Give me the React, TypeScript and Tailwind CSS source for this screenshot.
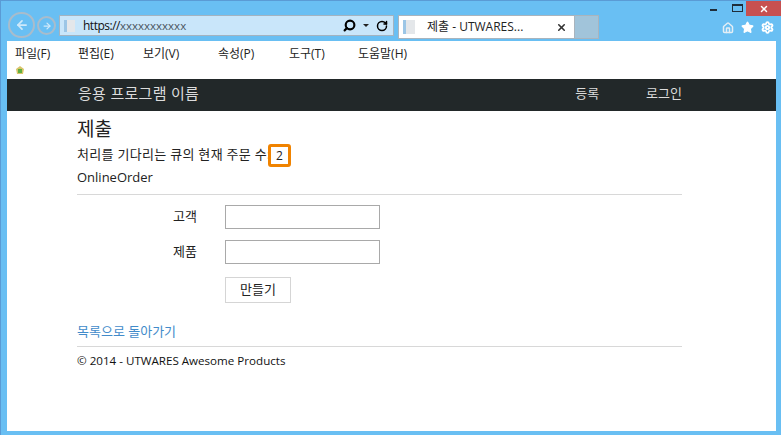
import { ArrowLeft, ArrowRight, House, RotateCw, Search, Settings, Star, X } from 'lucide-react'

const FONT = '"Open Sans", "Noto Sans CJK KR", sans-serif'

const menus = [
  { label: '파일(F)', width: 'w-[63px]' },
  { label: '편집(E)', width: 'w-[65px]' },
  { label: '보기(V)', width: 'w-[75px]' },
  { label: '속성(P)', width: 'w-[71px]' },
  { label: '도구(T)', width: 'w-[69px]' },
  { label: '도움말(H)', width: 'w-[60px]' },
]

function Favicon({ className }: { className: string }) {
  return (
    <div className={`flex shrink-0 ${className}`}>
      <div className="w-[3px] bg-[#9cc6e6]" />
      <div className="flex-1 bg-[#e4e7ea]" />
    </div>
  )
}

function BrowserBar() {
  return (
    <div className="relative flex h-[40px] shrink-0 items-start bg-[#69bff3] pt-[11px] pl-[7px]">
      {/* window buttons */}
      <div className="absolute top-0 right-0 flex h-[15px] items-start">
        <div className="mt-[8px] mr-[15px] h-[2px] w-[7px] bg-[#1f2d3a]" />
        <div className="mt-[3px] mr-[3px] h-[8px] w-[11px] border border-t-2 border-[#1f2d3a]" />
        <div className="flex h-[15px] w-[35px] items-center justify-center bg-[#c75050]">
          <X size={10} strokeWidth={3.5} className="text-white" />
        </div>
      </div>

      {/* back / forward */}
      <div className="flex h-[26px] w-[27px] items-center justify-center rounded-full border-2 border-[#a9bccb]">
        <ArrowLeft size={14} strokeWidth={3} className="text-[#cfe9fa]" />
      </div>
      <div className="mt-[4px] ml-[2px] flex h-[19px] w-[19px] items-center justify-center rounded-full border-2 border-[#a9bccb]">
        <ArrowRight size={10} strokeWidth={3} className="text-[#cfe9fa]" />
      </div>

      {/* address bar */}
      <div className="mt-[3px] ml-[3px] flex h-[21px] w-[335px] items-center border border-[#a3b3c0] bg-[#c9e6fa] pr-[3px] pl-[4px]">
        <Favicon className="h-[12px] w-[11px]" />
        <span className="ml-[8px] flex-1 text-[12px] tracking-[-0.5px] text-[#111]">
          https://<span className="text-[11.5px] tracking-normal text-[#4a5560]">xxxxxxxxxxx</span>
        </span>
        <Search size={13} strokeWidth={4} className="-scale-x-100 text-black" />
        <div className="mx-[7px] h-0 w-0 border-x-[3px] border-t-[3px] border-x-transparent border-t-[#222]" />
        <RotateCw size={12} strokeWidth={3} className="mr-[2px] text-black" />
      </div>

      {/* tab */}
      <div className="mt-[3px] ml-[4px] flex h-[24px] w-[177px] items-center border border-[#a9b4bd] bg-white pr-[7px] pl-[4px]">
        <Favicon className="h-[14px] w-[12px]" />
        <span className="ml-[12px] flex-1 text-[12px] whitespace-nowrap text-[#222]">제출 - UTWARES...</span>
        <X size={11} strokeWidth={3.5} className="text-[#333]" />
      </div>
      <div className="mt-[3px] h-[24px] w-[24px] border-y border-r border-[#a9b4bd] bg-[#a1c4da]" />

      {/* tool icons */}
      <div className="mt-[9px] mr-[7px] ml-auto flex items-center gap-[7px]">
        <House size={12} strokeWidth={3} className="text-[#e4eef5]" />
        <Star size={13} fill="white" className="text-white" />
        <Settings size={13} strokeWidth={3.5} className="text-white" />
      </div>
    </div>
  )
}

function MenuBar() {
  return (
    <div className="h-[38px] bg-white pt-[5px] pl-[8px]">
      <div className="flex h-[15px] items-center text-[12px] leading-[15px] text-[#222]">
        {menus.map(m => (
          <span key={m.label} className={`${m.width} whitespace-nowrap`}>
            {m.label}
          </span>
        ))}
      </div>
      <svg className="mt-[4px]" width="10" height="10" viewBox="0 0 10 10">
        <path d="M5 1 L9 4 L8 9 L2 9 L1 4 Z" fill="#d9c46a" />
        <rect x="3" y="4" width="4" height="4" fill="#5fae3f" />
      </svg>
    </div>
  )
}

function NavBar() {
  return (
    <div className="flex h-[32px] items-center bg-[#222829] pr-[94px] pb-[3px] pl-[71px] text-[#dcdcdc]">
      <span className="flex-1 text-[15px] tracking-[0.3px]">응용 프로그램 이름</span>
      <span className="text-[13px]">등록</span>
      <span className="ml-[47px] text-[13px]">로그인</span>
    </div>
  )
}

function Field({ label }: { label: string }) {
  return (
    <div className="flex h-[24px] items-center">
      <label className="w-[148px] pl-[96px] text-[13px] text-[#222]">{label}</label>
      <input className="h-[24px] w-[155px] border border-[#a9a9a9] bg-white" />
    </div>
  )
}

export default function App() {
  return (
    <div
      className="flex h-[435px] w-[781px] flex-col overflow-hidden border-t border-l border-[#5a9bd5] bg-[#69bff3]"
      style={{ fontFamily: FONT }}
    >
      <BrowserBar />
      <div className="mr-[5px] mb-[4px] ml-[6px] flex flex-1 flex-col bg-white">
        <MenuBar />
        <NavBar />
        <div className="ml-[70px] w-[605px] text-[#222]">
          <h2 className="mt-[6px] text-[19px] leading-[24px]">제출</h2>
          <div className="mt-[3px] flex h-[23px] items-center text-[13px] tracking-[0.3px]">
            <span className="w-[191px] pb-[2px] whitespace-nowrap">처리를 기다리는 큐의 현재 주문 수:</span>
            <span className="flex h-[23px] w-[23px] items-center justify-center rounded-[3px] border-[3px] border-[#f08300] bg-white text-[12px]">
              2
            </span>
          </div>
          <p className="text-[13px] leading-[20px]">OnlineOrder</p>
          <hr className="mt-[7px] border-[#d8d8d8]" />
          <div className="mt-[10px] flex flex-col gap-[11px]">
            <Field label="고객" />
            <Field label="제품" />
          </div>
          <button className="mt-[13px] ml-[148px] h-[26px] w-[66px] border border-[#d5d5d5] bg-white text-[13px] text-[#222]">
            만들기
          </button>
          <a className="mt-[19px] block text-[13px] leading-[18px] text-[#428bca]">목록으로 돌아가기</a>
          <hr className="mt-[6px] border-[#d8d8d8]" />
          <p className="mt-[5px] text-[11.6px] leading-[18px] text-[#111]">© 2014 - UTWARES Awesome Products</p>
        </div>
      </div>
    </div>
  )
}
